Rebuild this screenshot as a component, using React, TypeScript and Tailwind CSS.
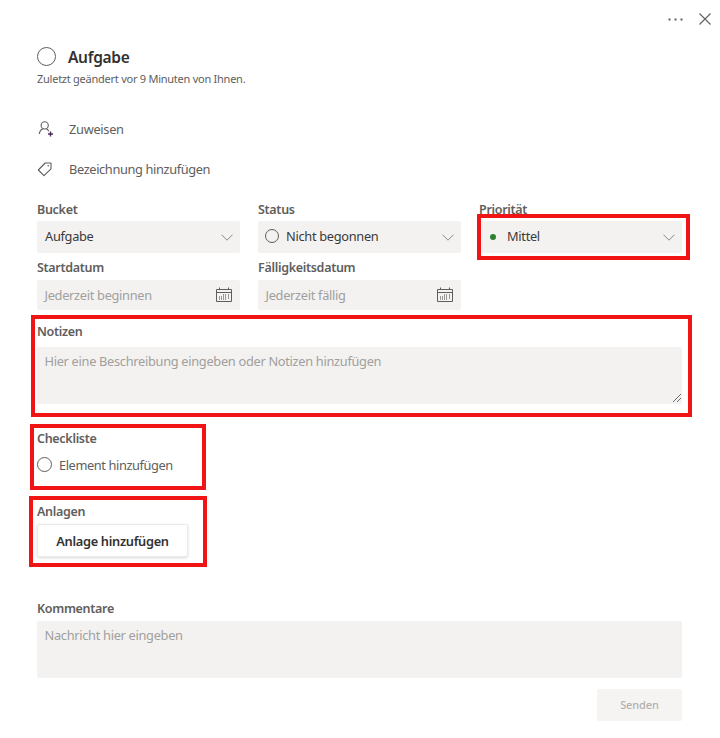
import type { ReactNode } from "react";

const ChevronIcon = () => (
  <svg width="12" height="7" viewBox="0 0 12 7" fill="none" stroke="#8a8886">
    <path d="M0.5 0.7L6 6.2L11.5 0.7" />
  </svg>
);

const CalendarIcon = () => (
  <svg className="-translate-y-px" width="16" height="15" viewBox="0 0 16 15" fill="none" stroke="#605e5c">
    <path d="M0.5 2.5H15.5V14.5H0.5ZM0.5 5.5H15.5" />
    <path d="M3.5 0.5V3M12.5 0.5V3" />
    <path d="M3.5 9V13M5.5 9V13M7.5 7V13M9.5 7V13M12.5 7V12" strokeOpacity="0.6" />
  </svg>
);

const PersonAddIcon = () => (
  <svg width="16" height="16" viewBox="0 0 16 16" fill="none" stroke="#605e5c" strokeWidth="1.1">
    <circle cx="7.7" cy="4.4" r="3.6" />
    <path d="M2.3 13C2.6 10.2 4.2 8.4 6.1 7.7M9.4 7.7C10.5 8.4 11.3 9.2 11.8 10.2" />
    <path d="M13.5 10.5V15.5M11 13H16" stroke="#4b2b5c" strokeWidth="1.4" />
  </svg>
);

const TagIcon = () => (
  <svg width="16" height="16" viewBox="0 0 16 16" fill="none" stroke="#605e5c" strokeWidth="1.1">
    <path d="M8.2 2H14V7.8L7 14.6L1.3 9Z" strokeLinejoin="round" />
    <circle cx="11.2" cy="4.8" r="0.8" fill="#605e5c" stroke="none" />
  </svg>
);

const Label = ({ children }: { children: ReactNode }) => (
  <div className="h-[18px] pt-px text-[12.5px] leading-[18px] font-semibold text-[#605e5c]">{children}</div>
);

const DateField = ({ text }: { text: string }) => (
  <div className="flex h-[30px] items-center justify-between rounded-[2px] bg-[#f3f2f1] pr-2 pl-[7.5px] text-[#a19f9d]">
    <span>{text}</span>
    <CalendarIcon />
  </div>
);

export default function App() {
  return (
    <div className="relative h-[738px] w-[720px] overflow-hidden bg-white pr-[38px] pl-[37px] font-['Noto_Sans',sans-serif] text-[12.8px] leading-[18px] tracking-[-0.3px] text-[#605e5c]">
      <div className="-mr-[29px] flex h-[38px] items-center justify-end gap-4">
        <svg width="15" height="3" viewBox="0 0 15 3" fill="#605e5c">
          <path d="M0.5 0.5H2.5V2.5H0.5ZM6.5 0.5H8.5V2.5H6.5ZM12.5 0.5H14.5V2.5H12.5Z" />
        </svg>
        <svg width="12" height="12" viewBox="0 0 12 12" fill="none" stroke="#605e5c" strokeWidth="1.1">
          <path d="M0.5 0.5L11.5 11.5M11.5 0.5L0.5 11.5" />
        </svg>
      </div>

      <div className="mt-[6px] flex h-6 items-center gap-3">
        <div className="size-[19px] rounded-full border border-[#605e5c]" />
        <h1 className="pt-px text-[15.5px] font-semibold text-[#323130]">Aufgabe</h1>
      </div>
      <p className="mt-[2px] h-[18px] text-[11px] leading-[18px] tracking-[-0.25px]">Zuletzt geändert vor 9 Minuten von Ihnen.</p>

      <div className="mt-[32px] flex h-[18px] items-center gap-4">
        <PersonAddIcon />
        <span>Zuweisen</span>
      </div>
      <div className="mt-[22px] flex h-[18px] items-center gap-4">
        <TagIcon />
        <span className="tracking-[-0.37px]">Bezeichnung hinzufügen</span>
      </div>

      <div className="mt-[22px] grid grid-cols-3 gap-x-[18px]">
        <div>
          <Label>Bucket</Label>
          <div className="mt-[3px] flex h-8 items-center justify-between rounded-[2px] bg-[#f3f2f1] pr-[7px] pl-2 text-[#3b3a39]">
            <span className="-mt-0.5">Aufgabe</span>
            <ChevronIcon />
          </div>
        </div>
        <div>
          <Label>Status</Label>
          <div className="mt-[3px] flex h-8 items-center rounded-[2px] bg-[#f3f2f1] pr-[7px] pl-[7px] text-[#3b3a39]">
            <div className="-mt-0.5 size-[14px] rounded-full border border-[#605e5c]" />
            <span className="-mt-0.5 ml-[7px] flex-1">Nicht begonnen</span>
            <ChevronIcon />
          </div>
        </div>
        <div>
          <Label>Priorität</Label>
          <div className="mt-[3px] flex h-8 items-center rounded-[2px] bg-[#f3f2f1] pr-[7px] pl-[11px] text-[#3b3a39]">
            <div className="-mt-px size-[6px] rounded-full bg-[#2f8132]" />
            <span className="-mt-0.5 ml-[11px] flex-1">Mittel</span>
            <ChevronIcon />
          </div>
        </div>
      </div>

      <div className="mt-[5px] grid grid-cols-3 gap-x-[18px]">
        <div className="flex flex-col gap-[4px]">
          <Label>Startdatum</Label>
          <DateField text="Jederzeit beginnen" />
        </div>
        <div className="flex flex-col gap-[4px]">
          <Label>Fälligkeitsdatum</Label>
          <DateField text="Jederzeit fällig" />
        </div>
      </div>

      <div className="mt-[12px]">
        <Label>Notizen</Label>
        <div className="mt-[7px] flex h-[57px] justify-between rounded-[2px] bg-[#f3f2f1] pt-[5px] pl-[7.5px] text-[#a19f9d]">
          <span>Hier eine Beschreibung eingeben oder Notizen hinzufügen</span>
          <svg className="mr-px mb-[2px] self-end" width="8" height="8" viewBox="0 0 8 8" stroke="#6b6b6b">
            <path d="M0 8L8 0M4 8L8 4" />
          </svg>
        </div>
      </div>

      <div className="mt-[25px]">
        <Label>Checkliste</Label>
        <div className="mt-[9px] flex h-[18px] items-center gap-[7px]">
          <div className="-mt-px size-[15px] rounded-full border border-[#605e5c]" />
          <span className="tracking-[-0.4px]">Element hinzufügen</span>
        </div>
      </div>

      <div className="mt-[28px]">
        <Label>Anlagen</Label>
        <button className="mt-[4px] flex h-[33px] w-[151px] items-center justify-center rounded-[2px] border border-[#edebe9] bg-white font-semibold text-[#323130] shadow-[0_1px_3px_rgba(0,0,0,0.15)]">
          Anlage hinzufügen
        </button>
      </div>

      <div className="mt-[42px]">
        <Label>Kommentare</Label>
        <div className="mt-[4px] h-[57px] rounded-[2px] bg-[#f3f2f1] pt-[5px] pl-[7.5px] text-[#a19f9d]">
          Nachricht hier eingeben
        </div>
        <button className="mt-[11px] ml-auto flex h-8 w-[85px] items-center justify-center rounded-[2px] bg-[#f5f4f3] text-[11px] font-medium tracking-[-0.1px] text-[#b3b0ad]">
          Senden
        </button>
      </div>

      {/* Highlight frames */}
      <div className="absolute top-[214px] left-[477px] h-[46px] w-[213px] border-4 border-[#f01414]" />
      <div className="absolute top-[315px] left-[31px] h-[102px] w-[661px] border-4 border-[#f01414]" />
      <div className="absolute top-[424px] left-[30px] h-[66px] w-[176px] border-4 border-[#f01414]" />
      <div className="absolute top-[496px] left-[29px] h-[71px] w-[178px] border-4 border-[#f01414]" />
    </div>
  );
}
